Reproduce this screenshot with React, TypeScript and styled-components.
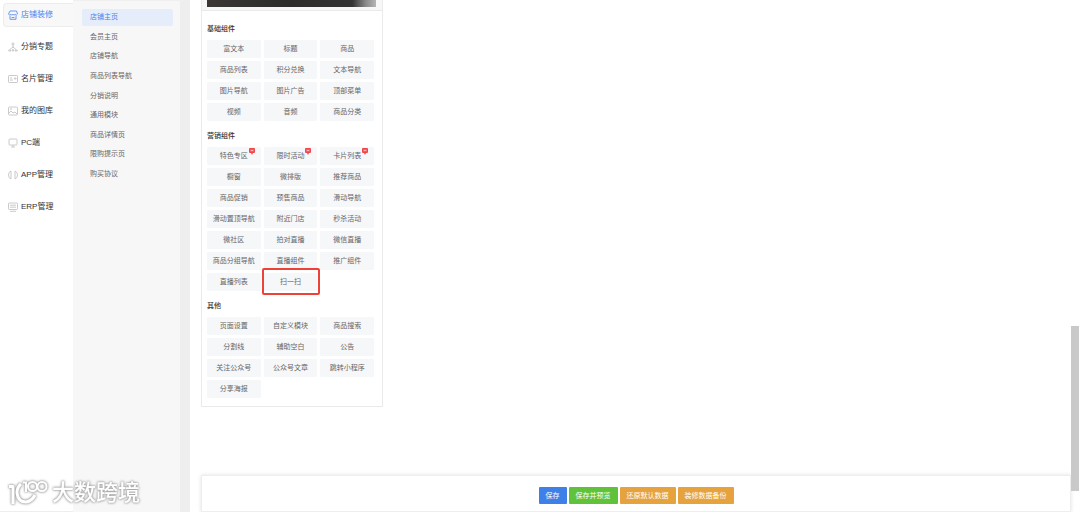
import React from "react";
import styled, { createGlobalStyle } from "styled-components";

const Global = createGlobalStyle`
  * { box-sizing: border-box; }
  body { margin: 0; background: #fff; font-family: "Liberation Sans", "Noto Sans CJK SC", sans-serif; font-size: 7px; color: #666; }
  button { font-family: inherit; border: 0; padding: 0; cursor: pointer; }
  a { text-decoration: none; color: inherit; }
  h2 { margin: 0; }
`;

const Page = styled.div`
  display: flex;
  min-height: 100vh;
`;

const MainNav = styled.nav`
  display: flex;
  flex-direction: column;
  flex: 0 0 73px;
  gap: 8px;
  padding: 3px 0 0 3px;
  border-bottom: 1px solid #eee;
`;

const MainLink = styled.a<{ $active?: boolean }>`
  display: flex;
  align-items: center;
  gap: 3px;
  height: 24px;
  padding-left: 4px;
  font-size: 8px;
  line-height: 12px;
  border: 1px solid ${(p) => (p.$active ? "#ececec" : "transparent")};
  border-right: 0;
  border-radius: 4px 0 0 4px;
  background: ${(p) => (p.$active ? "#f8f8f8" : "transparent")};
  && { color: ${(p) => (p.$active ? "#4a82ee" : "#333")}; }
  svg { flex: none; color: ${(p) => (p.$active ? "#5b8ff0" : "#c4c4c4")}; }
`;

const SubNav = styled.nav`
  flex: 0 0 117px;
  padding: 8px 7px 0 9px;
  background: #f7f7f7;
  border-top: 1px solid #f0f0f0;
  border-right: 10px solid #eee;
`;

const SubList = styled.div`
  display: flex;
  flex-direction: column;
  justify-content: space-between;
  height: 174px;
`;

const SubLink = styled.a<{ $active?: boolean }>`
  display: block;
  height: 17px;
  padding-left: 8px;
  line-height: 16px;
  border-radius: 2px;
  background: ${(p) => (p.$active ? "#e5ecfa" : "transparent")};
  && { color: ${(p) => (p.$active ? "#4a82ee" : "#666")}; }
`;

const Main = styled.main`
  display: flex;
  flex: 1;
  flex-direction: column;
  justify-content: space-between;
  padding: 0 9px 0 11px;
`;

const Panel = styled.section`
  width: 182px;
  border: 1px solid #eaeaea;
  border-top: 0;
  padding-bottom: 8px;
`;

const Preview = styled.div`
  height: 11px;
  margin-bottom: 3px;
  padding: 0 6px 0 5px;
  background: #f7f7f7;
  border-bottom: 1px solid #eaeaea;
`;

const Banner = styled.div`
  height: 7px;
  background: linear-gradient(90deg, #3a3735 0%, #2d2b2a 50%, #333 86%, #8a8a8a 94%, #b5b5b5 100%);
`;

const Group = styled.div`
  padding: 9px 8px 0 5px;
`;

const GroupTitle = styled.h2`
  font-size: 7px;
  font-weight: 500;
  line-height: 12px;
  margin-bottom: 5px;
  color: #333;
`;

const Tiles = styled.div`
  display: grid;
  grid-template-columns: repeat(3, 1fr);
  grid-auto-rows: 18px;
  gap: 3px;
`;

const Tile = styled.button<{ $marked?: boolean }>`
  position: relative;
  background: #f6f7f9;
  color: #666;
  font-size: 7px;
  line-height: 18px;
  border-radius: 1px;
  &::after {
    content: "";
    display: ${(p) => (p.$marked ? "block" : "none")};
    position: absolute;
    inset: -5px -3px -4px -2px;
    border: 2px solid #ee4237;
    border-radius: 2px;
  }
`;

const Badge = styled.svg`
  position: absolute;
  top: 1px;
  right: 6px;
`;

const Footer = styled.footer`
  display: flex;
  align-items: center;
  justify-content: center;
  gap: 2px;
  height: 37px;
  padding-top: 4px;
  border: 1px solid #eee;
  box-shadow: 0 0 4px rgba(0, 0, 0, 0.12);
`;

const Action = styled.button<{ $color: string }>`
  height: 17px;
  padding: 0 7px;
  font-size: 7px;
  line-height: 17px;
  color: #fff;
  border-radius: 1px;
  background: ${(p) => p.$color};
`;

const ScrollThumb = styled.div`
  position: fixed;
  right: 1px;
  bottom: 21px;
  width: 8px;
  height: 165px;
  background: #c9c9c9;
`;

const Watermark = styled.div`
  position: fixed;
  left: 8px;
  bottom: 4px;
  display: flex;
  align-items: center;
  gap: 4px;
  font-size: 22px;
  line-height: 30px;
  font-weight: 500;
  color: #fff;
  filter: drop-shadow(0 0 1px #999) drop-shadow(0 0 1px #bbb);
`;

const icons: Record<string, React.ReactNode> = {
  shop: <><path d="M2 1h6.500l1 3q-1 2-2.300.3Q6 6 5 4.300 4 6 2.800 4.300 1.500 6 .5 4zM2 5.500V9.300h6V5.500M3.500 7.500h3" /></>,
  share: <><path d="M5 3v3M5 5L2 7.500M5 5l3 2.500" /><circle cx="5" cy="2" r="1.1" /><path d="M.8 8h2v1h-2zM7.200 8h2v1h-2zM4.500 7.500h1v1.500h-1z" /></>,
  card: <><rect x=".5" y="1.500" width="9" height="7" rx=".7" /><path d="M2 4h2M2 6h3M6.500 4h1.500v1H6.500z" /></>,
  image: <><rect x=".5" y="1" width="9" height="8" rx="1" /><path d="M1 7l2-2 2 2 2-1 2 2" /><circle cx="3" cy="3" r=".5" /></>,
  screen: <><rect x="1" y="1" width="8" height="6" rx=".7" /><path d="M5 7v2M3 9h4" /></>,
  app: <><path d="M3 1Q.5 2 .5 5T3 9M7 1q2.500 1 2.500 4T7 9M3 1v8M7 1v8" /></>,
  erp: <><rect x=".5" y="1" width="9" height="6.500" rx=".7" /><path d="M2 3.200h6M2 5.200h6M2 9.300h6" /></>,
};

const mainItems = [
  ["shop", "店铺装修"], ["share", "分销专题"], ["card", "名片管理"], ["image", "我的图库"],
  ["screen", "PC端"], ["app", "APP管理"], ["erp", "ERP管理"],
];
const subItems = ["店铺主页", "会员主页", "店铺导航", "商品列表导航", "分销说明", "通用模块", "商品详情页", "限购提示页", "购买协议"];
const groups = [
  { title: "基础组件", items: ["富文本", "标题", "商品", "商品列表", "积分兑换", "文本导航", "图片导航", "图片广告", "顶部菜单", "视频", "音频", "商品分类"] },
  { title: "营销组件", items: ["特色专区", "限时活动", "卡片列表", "橱窗", "微排版", "推荐商品", "商品促销", "预售商品", "滑动导航", "滑动置顶导航", "附近门店", "秒杀活动", "微社区", "拍对直播", "微信直播", "商品分组导航", "直播组件", "推广组件", "直播列表", "扫一扫"] },
  { title: "其他", items: ["页面设置", "自定义模块", "商品搜索", "分割线", "辅助空白", "公告", "关注公众号", "公众号文章", "跳转小程序", "分享海报"] },
];
const hot = ["特色专区", "限时活动", "卡片列表"];

export default function App() {
  return (
    <>
      <Global />
      <Page>
        <MainNav>
          {mainItems.map(([icon, label], i) => (
            <MainLink key={label} href="#" $active={i === 0}>
              <svg width="10" height="10" viewBox="0 0 10 10" fill="none" stroke="currentColor" strokeWidth=".9">{icons[icon]}</svg>
              {label}
            </MainLink>
          ))}
        </MainNav>
        <SubNav>
          <SubList>
            {subItems.map((label, i) => <SubLink key={label} href="#" $active={i === 0}>{label}</SubLink>)}
          </SubList>
        </SubNav>
        <Main>
          <Panel>
            <Preview><Banner /></Preview>
            {groups.map((g) => (
              <Group key={g.title}>
                <GroupTitle>{g.title}</GroupTitle>
                <Tiles>
                  {g.items.map((t) => (
                    <Tile key={t} type="button" $marked={t === "扫一扫"}>
                      {t}
                      {hot.includes(t) && (
                        <Badge width="6" height="7" viewBox="0 0 6 7">
                          <path d="M1 0h4q1 0 1 1v3q0 1-1 1H4L3 7 2 5H1Q0 5 0 4V1q0-1 1-1z" fill="#f0464b" />
                          <path d="M2 1.500v2M4 1.500v2M2 2.500h2" stroke="#fff" strokeWidth=".5" />
                        </Badge>
                      )}
                    </Tile>
                  ))}
                </Tiles>
              </Group>
            ))}
          </Panel>
          <Footer>
            <Action type="button" $color="#3f7fe8">保存</Action>
            <Action type="button" $color="#60c23a">保存并预览</Action>
            <Action type="button" $color="#e6a23c">还原默认数据</Action>
            <Action type="button" $color="#e6a23c">装修数据备份</Action>
          </Footer>
        </Main>
      </Page>
      <ScrollThumb />
      <Watermark>
        <svg width="40" height="28" viewBox="0 0 40 28" fill="none" stroke="#fff" strokeWidth="3" strokeLinejoin="round">
          <path d="M1 7.500h4V25" />
          <path d="M13 5Q9 8 9 14q1 9 9 9 6-1 9-7" />
          <path d="M15 3.500h3V13" strokeWidth="2" />
          <circle cx="24.500" cy="7.500" r="4.500" strokeWidth="2" />
          <circle cx="34" cy="7.500" r="4.500" strokeWidth="2" />
        </svg>
        大数跨境
      </Watermark>
    </>
  );
}
